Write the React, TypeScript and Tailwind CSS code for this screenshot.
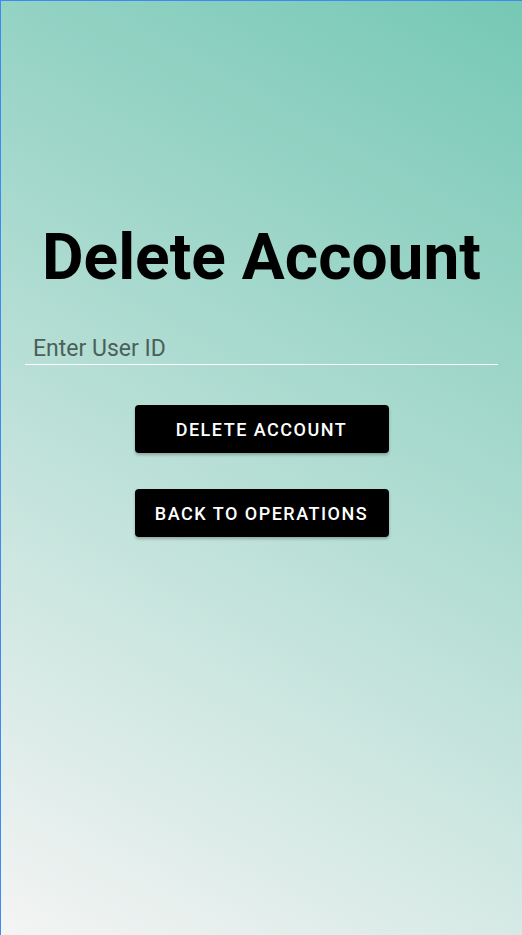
export default function App() {
  return (
    <div className="h-[935px] w-[522px] overflow-hidden border-t border-l border-[#3d8bf2] bg-[linear-gradient(29deg,#f4f4f4_0%,#76c8b5_100%)] font-['Roboto',sans-serif]">
      <div className="flex flex-col items-center px-6 pt-[222px]">
        <h1 className="whitespace-nowrap text-[64px] font-bold leading-[70px] text-black">
          Delete Account
        </h1>

        <div className="mt-[41px] w-full">
          <input
            type="text"
            placeholder="Enter User ID"
            className="block w-full border-b border-white bg-transparent px-2 text-[23px] leading-[30px] text-black outline-none placeholder:text-[#4c5f5a]"
          />
        </div>

        <button className="mt-[40px] h-[48px] w-[254px] rounded bg-black text-[18px] font-medium tracking-[1.5px] text-white shadow-[0_2px_3px_rgba(0,0,0,0.25)]">
          DELETE ACCOUNT
        </button>
        <button className="mt-[36px] h-[48px] w-[254px] rounded bg-black text-[18px] font-medium tracking-[1.5px] text-white shadow-[0_2px_3px_rgba(0,0,0,0.25)]">
          BACK TO OPERATIONS
        </button>
      </div>
    </div>
  );
}
